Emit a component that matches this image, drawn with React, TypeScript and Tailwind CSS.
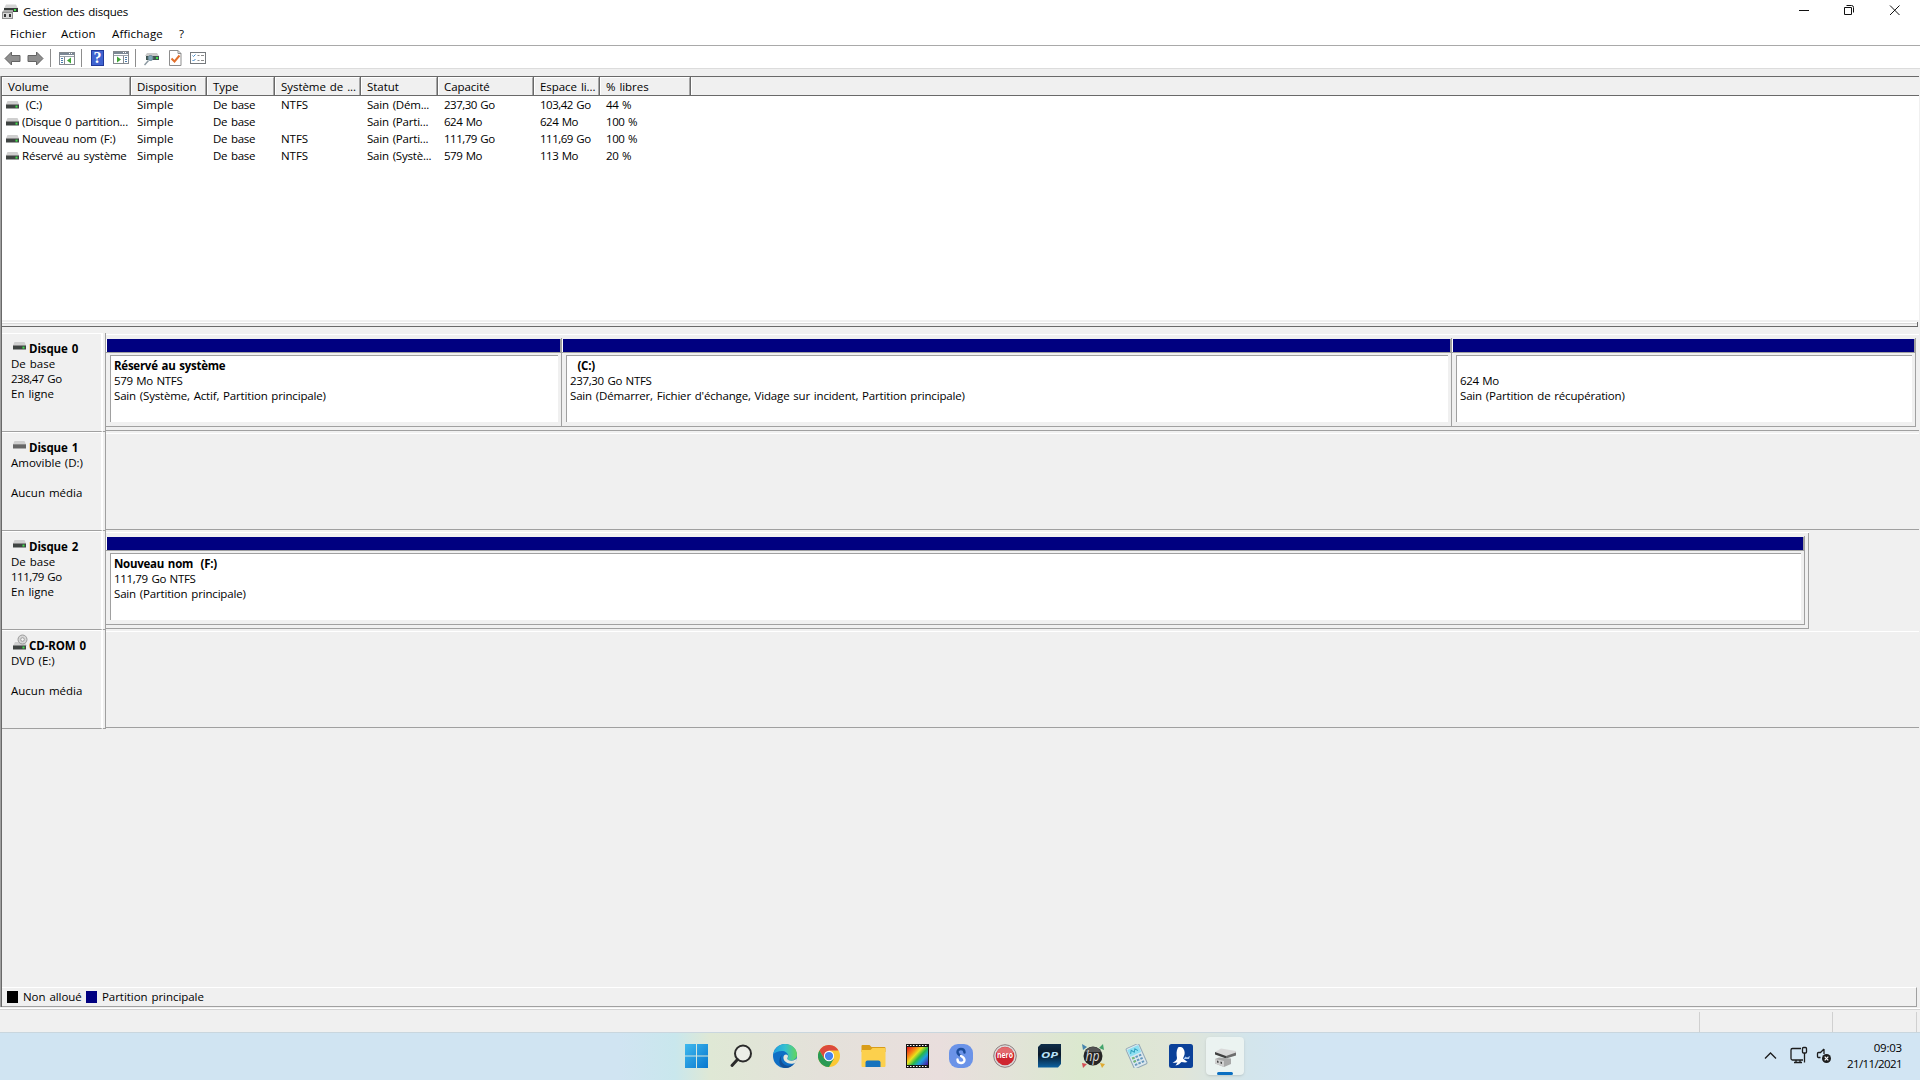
import type { ReactNode } from 'react';
import { clsx } from 'clsx';

interface Volume {
  name: string;
  layout: string;
  type: string;
  fs: string;
  status: string;
  capacity: string;
  free: string;
  percent: string;
}

interface Partition {
  title: string;
  size: string;
  status: string;
  width: string;
}

interface Disk {
  name: string;
  icon: 'disk' | 'removable' | 'cd';
  lines: string[];
  partitions: Partition[];
}

const columns = [
  { key: 'name', label: 'Volume', width: 'w-[129px]', tracking: 'tracking-[-0.2px]' },
  { key: 'layout', label: 'Disposition', width: 'w-[76px]', tracking: 'tracking-[0.05px]' },
  { key: 'type', label: 'Type', width: 'w-[68px]', tracking: 'tracking-[-0.3px]' },
  { key: 'fs', label: 'Système de ...', width: 'w-[86px]', tracking: 'tracking-[-0.05px]' },
  { key: 'status', label: 'Statut', width: 'w-[77px]', tracking: 'tracking-[-0.2px]' },
  { key: 'capacity', label: 'Capacité', width: 'w-[96px]', tracking: 'tracking-[-0.5px]' },
  { key: 'free', label: 'Espace li...', width: 'w-[66px]', tracking: 'tracking-[-0.5px]' },
  { key: 'percent', label: '% libres', width: 'w-[91px]', tracking: 'tracking-[-0.4px]' },
] as const;

const volumes: Volume[] = [
  { name: ' (C:)', layout: 'Simple', type: 'De base', fs: 'NTFS', status: 'Sain (Dém...', capacity: '237,30 Go', free: '103,42 Go', percent: '44 %' },
  { name: '(Disque 0 partition...', layout: 'Simple', type: 'De base', fs: '', status: 'Sain (Parti...', capacity: '624 Mo', free: '624 Mo', percent: '100 %' },
  { name: 'Nouveau nom (F:)', layout: 'Simple', type: 'De base', fs: 'NTFS', status: 'Sain (Parti...', capacity: '111,79 Go', free: '111,69 Go', percent: '100 %' },
  { name: 'Réservé au système', layout: 'Simple', type: 'De base', fs: 'NTFS', status: 'Sain (Systè...', capacity: '579 Mo', free: '113 Mo', percent: '20 %' },
];

const disks: Disk[] = [
  {
    name: 'Disque 0',
    icon: 'disk',
    lines: ['De base', '238,47 Go', 'En ligne'],
    partitions: [
      { title: 'Réservé au système', size: '579 Mo NTFS', status: 'Sain (Système, Actif, Partition principale)', width: 'w-[456px]' },
      { title: '  (C:)', size: '237,30 Go NTFS', status: "Sain (Démarrer, Fichier d'échange, Vidage sur incident, Partition principale)", width: 'w-[890px]' },
      { title: ' ', size: '624 Mo', status: 'Sain (Partition de récupération)', width: 'w-[464px]' },
    ],
  },
  { name: 'Disque 1', icon: 'removable', lines: ['Amovible (D:)', ' ', 'Aucun média'], partitions: [] },
  {
    name: 'Disque 2',
    icon: 'disk',
    lines: ['De base', '111,79 Go', 'En ligne'],
    partitions: [
      { title: 'Nouveau nom  (F:)', size: '111,79 Go NTFS', status: 'Sain (Partition principale)', width: 'w-[1699px]' },
    ],
  },
  { name: 'CD-ROM 0', icon: 'cd', lines: ['DVD (E:)', ' ', 'Aucun média'], partitions: [] },
];

function DriveIcon({ led = true }: { led?: boolean }) {
  return (
    <svg width="13" height="8" viewBox="0 0 13 8" className="shrink-0">
      <path d="M1.500 0h10L13 3.500H0z" fill="#cfcfcf" />
      <rect y="3" width="13" height="4.500" fill={led ? '#3f4442' : '#666'} />
      <rect y="3" width="13" height="1" fill="#8a8a8a" />
      {led && <rect x="9.500" y="4.600" width="2" height="2" fill="#3fe04a" />}
    </svg>
  );
}

function CdIcon() {
  return (
    <svg width="15" height="16" viewBox="0 0 15 16" className="shrink-0">
      <path d="M2 8h10l2 4H0z" fill="#cfcfcf" />
      <circle cx="9.500" cy="5.500" r="4.500" fill="#d6d6d6" stroke="#9b9b9b" />
      <circle cx="9.500" cy="5.500" r="1.800" fill="#f5f5f5" stroke="#9b9b9b" />
      <rect y="11.500" width="13" height="4" fill="#3f4442" />
      <rect x="9.500" y="12.500" width="2" height="2" fill="#3fe04a" />
    </svg>
  );
}

function AppIcon() {
  return (
    <svg width="16" height="16" viewBox="0 0 16 16">
      <path d="M4 0.500h10l2 4H2z" fill="#d4d4d4" />
      <rect x="2" y="4" width="14" height="4" fill="#383c3a" />
      <rect x="12" y="5" width="2" height="2" fill="#3fe04a" />
      <path d="M0 8l2-2h9v9H0z" fill="#aaa" />
      <rect x="0.500" y="8.500" width="10" height="6" fill="#d8d8d8" stroke="#909090" />
      <rect x="2" y="10" width="2" height="3" fill="#333" />
      <rect x="7" y="10" width="2" height="3" fill="#333" />
    </svg>
  );
}

function TitleBar() {
  return (
    <div className="flex h-6 items-center justify-between bg-white pl-[2px]">
      <div className="flex items-center gap-[5px] tracking-[-0.25px]">
        <AppIcon />
        <span>Gestion des disques</span>
      </div>
      <svg width="121" height="24" viewBox="0 0 121 24" fill="none" stroke="#111">
        <path d="M0 10.500h10" />
        <path d="M45.500 7.500h7v7h-7zM47.500 5.500h5q2 0 2 2v5" />
        <path d="M91 5.500l9.500 9.500M100.500 5.500l-9.500 9.500" />
      </svg>
    </div>
  );
}

function MenuBar() {
  return (
    <div className="flex h-[21px] items-center bg-white pb-[2px] pl-[10px] tracking-[0.15px]">
      <span className="w-[51px]">Fichier</span>
      <span className="w-[51px]">Action</span>
      <span className="w-[67px]">Affichage</span>
      <span>?</span>
    </div>
  );
}

function ConsoleIcon({ flip = false }: { flip?: boolean }) {
  return (
    <svg width="17" height="15" viewBox="0 0 17 15">
      <rect x="0.500" y="1.500" width="15" height="12" fill="#fff" stroke="#84898f" />
      <rect x="1" y="2" width="14" height="2" fill="#7b8794" />
      <rect x="10" y="2" width="1" height="1" fill="#fff" />
      <rect x="12" y="2" width="1" height="1" fill="#fff" />
      <path d="M1 5.500h14" stroke="#9aa2ab" />
      {flip ? (
        <>
          <path d="M10.500 6v7" stroke="#84898f" />
          <path d="M12 7.500h2M12 9.500h2M12 11.500h2" stroke="#4b7cab" />
          <path d="M4 6.500v6l4-3z" fill="#3fa535" />
        </>
      ) : (
        <>
          <path d="M5.500 6v7" stroke="#84898f" />
          <path d="M2 7.500h2M2 9.500h2M2 11.500h2" stroke="#4b7cab" />
          <path d="M12 6.500v6l-4-3z" fill="#3fa535" />
        </>
      )}
    </svg>
  );
}

function Arrow({ back = false }: { back?: boolean }) {
  return (
    <svg width="17" height="15" viewBox="0 0 17 15">
      <path
        d={back ? 'M1 7.500L7.500 1v3.500h8.500v6H7.500V14z' : 'M16 7.500L9.500 1v3.500H1v6h8.500V14z'}
        fill="#8f8f8f"
        stroke="#646464"
        strokeLinejoin="round"
      />
    </svg>
  );
}

function Separator() {
  return <div className="h-[18px] w-px bg-[#8d8d8d]" />;
}

function Toolbar() {
  return (
    <div className="flex h-[24px] items-center border-t border-b border-t-[#a9a9a9] border-b-[#dcdcdc] bg-white pt-[2px] pl-1">
      <div className="flex w-[46px] gap-[6px]">
        <Arrow back />
        <Arrow />
      </div>
      <Separator />
      <div className="flex w-[30px] pl-2"><ConsoleIcon /></div>
      <Separator />
      <div className="flex w-[53px] gap-[9px] pl-[9px]">
        <div className="flex h-4 w-[13px] shrink-0 items-center justify-center border border-[#21399b] bg-[#3f63d0] font-['Liberation_Serif',serif] text-[16px] leading-none font-bold text-white">?</div>
        <ConsoleIcon flip />
      </div>
      <Separator />
      <div className="flex items-center gap-[9px] pl-2">
        <svg width="16" height="15" viewBox="0 0 16 15">
          <path d="M3 2h10l2 3H1z" fill="#c9c9c9" />
          <rect x="2" y="5" width="13" height="4" fill="#3f5550" />
          <rect x="12" y="6" width="2" height="2" fill="#3fe04a" />
          <circle cx="6.500" cy="7" r="2.500" fill="#7fa6b8" stroke="#6b8796" />
          <path d="M4.500 9.500L0.500 14" stroke="#8b98a0" strokeWidth="1.500" />
        </svg>
        <svg width="13" height="16" viewBox="0 0 13 16">
          <path d="M0.500 0.500h8.500l3 3v12H0.500z" fill="#fff" stroke="#8d8d8d" />
          <path d="M9 0.500v3h3" fill="none" stroke="#8d8d8d" />
          <path d="M2.500 8.500l3 3 5-6" fill="none" stroke="#e2702c" strokeWidth="2" />
        </svg>
        <svg width="16" height="13" viewBox="0 0 16 13" className="-ml-px">
          <rect x="0.500" y="0.500" width="15" height="11" fill="#fff" stroke="#75797d" />
          <path d="M2.500 3.500l1 1 2-2M2.500 8l1 1 2-2" fill="none" stroke="#3d86c6" />
          <path d="M7.500 3.500h2M11 3.500h3M7.500 8.500h2M11 8.500h3" stroke="#8b8b8b" />
        </svg>
      </div>
    </div>
  );
}

function VolumeList() {
  return (
    <div className="flex h-[244px] shrink-0 flex-col border-t border-[#696969] bg-white">
      <div className="flex h-[19px] border-b border-[#696969] bg-[#f0f0f0]">
        {columns.map((col) => (
          <div key={col.key} className={clsx('h-full shrink-0 border-r border-[#696969]', col.width)}>
            <div className="h-full border-t border-r border-l border-t-white border-r-[#a6a6a6] border-l-white pl-[5px] leading-[17px] tracking-[-0.05px] whitespace-pre">
              {col.label}
            </div>
          </div>
        ))}
        <div className="grow border-l border-white" />
      </div>
      {volumes.map((volume) => (
        <div key={volume.name} className="flex h-[17px] leading-[18px]">
          {columns.map((col) => (
            <div key={col.key} className={clsx('flex shrink-0 whitespace-pre', col.width, col.tracking, col.key === 'name' ? 'gap-[3px] pl-[4px]' : 'pl-[6px]')}>
              {col.key === 'name' && <div className="pt-[5px]"><DriveIcon /></div>}
              {volume[col.key]}
            </div>
          ))}
        </div>
      ))}
    </div>
  );
}

function PartitionBox({ partition }: { partition: Partition }) {
  return (
    <div className={clsx('flex h-[89px] shrink-0 flex-col border-r border-b border-[#a0a0a0]', partition.width)}>
      <div className="mt-px h-[13px] border-r border-l border-r-[#a0a0a0] border-l-white bg-[#000080]" />
      <div className="flex grow flex-col border-t border-[#a0a0a0] pt-[2px] pr-[3px] pb-[4px] pl-[4px]">
        <div className="grow border-t border-l border-[#a0a0a0] bg-white pt-[2px] pl-[3px] leading-[15px] whitespace-pre">
          <div className="font-bold tracking-[-0.25px]">{partition.title}</div>
          <div className="tracking-[-0.35px]">{partition.size}</div>
          <div className="tracking-[-0.17px]">{partition.status}</div>
        </div>
      </div>
    </div>
  );
}

function DiskRow({ disk }: { disk: Disk }) {
  // a smaller disk gets a frame that stops short of the right edge
  const partial = disk.partitions.length === 1;

  return (
    <div className="flex h-[99px]">
      <div className="w-[101px] shrink-0 border-t border-r-2 border-b border-t-white border-r-white border-b-[#a0a0a0] pt-[7px] pl-[9px] leading-[15px] whitespace-pre">
        <div className="flex h-[15px] items-end gap-[2px] pl-[2px] font-bold tracking-[-0.1px]">
          <div className={clsx('w-[14px] shrink-0', disk.icon === 'cd' ? 'pb-[3px]' : 'pb-[6px]')}>
            {disk.icon === 'cd' ? <CdIcon /> : <DriveIcon led={disk.icon === 'disk'} />}
          </div>
          {disk.name}
        </div>
        {disk.lines.map((line, i) => (
          <div key={i} className={/\d/.test(line) ? 'tracking-[-0.5px]' : 'tracking-[0px]'}>{line}</div>
        ))}
      </div>
      <div className="w-[3px] shrink-0 border-r border-b border-[#a0a0a0]" />
      <div className="flex grow flex-col pt-px pb-px">
        <div className={clsx('flex grow border-t border-b border-t-white border-b-[#a0a0a0] pt-[3px]', partial && 'w-[1703px]')}>
          {disk.partitions.map((partition) => (
            <PartitionBox key={partition.status} partition={partition} />
          ))}
          {partial && <div className="-mt-[3px] grow border-r border-[#a0a0a0]" />}
        </div>
      </div>
    </div>
  );
}

function Legend() {
  return (
    <div className="mr-[2px] flex h-5 items-center border-t border-r border-b border-t-white border-r-[#a0a0a0] border-b-[#a0a0a0] pl-[5px] tracking-[-0.05px]">
      <div className="mr-[5px] h-3 w-[11px] bg-black" />
      <span className="w-[63px]">Non alloué</span>
      <div className="mr-[5px] h-3 w-[11px] bg-[#000080]" />
      <span>Partition principale</span>
    </div>
  );
}

function StatusBar() {
  return (
    <div className="flex h-[23px] justify-end border-t border-[#d4d4d4] pt-[2px]">
      <div className="w-[133px] border-l border-[#d0d0d0]" />
      <div className="w-[85px] border-r border-l border-[#d0d0d0]" />
      <div className="w-[3px]" />
    </div>
  );
}

function TaskButton({ active = false, children }: { active?: boolean; children: ReactNode }) {
  return (
    <div className={clsx('relative flex h-[38px] w-[38px] items-center justify-center rounded', active && 'bg-[#ebf3f1] shadow-sm')}>
      {children}
      {active && <div className="absolute bottom-0 h-[3px] w-4 rounded-full bg-[#0a6fc2]" />}
    </div>
  );
}

function Taskbar() {
  return (
    <div className="flex h-12 items-center border-t border-[#c9d6de] bg-[linear-gradient(90deg,#d0e4f2_0,#d0e4f2_620px,#c9e7ed_675px,#dfe8d5_710px,#e4e1da_820px,#e9dedd_940px,#e2e3d8_1010px,#dbe8cf_1080px,#e0e5d8_1180px,#d3e5ec_1250px,#d2e5f3_1300px)] pb-px">
      <div className="flex grow gap-[6px] pl-[678px]">
        <TaskButton>
          <svg width="23" height="24" viewBox="0 0 23 24" className="-ml-px">
            <defs>
              <linearGradient id="win" x1="0" y1="0" x2="1" y2="1">
                <stop offset="0" stopColor="#3fb9ee" />
                <stop offset="1" stopColor="#0877cf" />
              </linearGradient>
            </defs>
            <path d="M0 0h11v11.500H0zM12 0h11v11.500H12zM0 12.500h11V24H0zM12 12.500h11V24H12z" fill="url(#win)" />
          </svg>
        </TaskButton>
        <TaskButton>
          <svg width="24" height="24" viewBox="0 0 24 24" fill="none" stroke="#2b2b2b">
            <circle cx="14" cy="9.500" r="8" strokeWidth="2" fill="#eceee8" />
            <path d="M8.500 15.500L3 21.500" strokeWidth="3" strokeLinecap="round" />
          </svg>
        </TaskButton>
        <TaskButton>
          <svg width="24" height="24" viewBox="0 0 24 24">
            <defs>
              <linearGradient id="edgeTop" x1="0" x2="1">
                <stop offset="0" stopColor="#1e9fe0" />
                <stop offset="0.500" stopColor="#35c0d0" />
                <stop offset="1" stopColor="#62d65a" />
              </linearGradient>
            </defs>
            <circle cx="12" cy="12" r="12" fill="#0f6fc5" />
            <path d="M0.300 10C1.500 4 6.500 0 12 0c7 0 12 5 12 10.500 0 4-3 6-6 6-2.500 0-4-1-3.500-2 .7-1 .8-1.500.8-2.500C15 9 12 7 9 7 5 7 2 8.500 0.300 10z" fill="url(#edgeTop)" />
            <path d="M9.500 10.500c-3 3-1.500 9.500 4 11 3 .8 6-.3 8-2.500-2 3.500-5.500 5-9 5C7 23.800 6 19 6.500 16c.3-2.500 1.500-4.500 3-5.500z" fill="#124f96" />
            <path d="M15 12c0 1.500-1 2-.6 3 .8 1.700 4.600 2.500 8 .5l1.600-1-1.500 4c-2 1.500-5.500 1.600-8 .5-3.500-1.500-5-5-3.500-7.500 1.500-2 4-1 4 .5z" fill="#e5e7dc" />
          </svg>
        </TaskButton>
        <TaskButton>
          <svg width="22" height="22" viewBox="0 0 24 24">
            <circle cx="12" cy="12" r="12" fill="#fbc834" />
            <path d="M12 6h10.400A12 12 0 0 0 1.600 6L6.800 15z" fill="#dc4a3d" />
            <path d="M1.600 6A12 12 0 0 0 12 24l5.200-9L6.800 15z" fill="#2a9a54" />
            <circle cx="12" cy="12" r="5.600" fill="#fff" />
            <circle cx="12" cy="12" r="4.500" fill="#4583ee" />
          </svg>
        </TaskButton>
        <TaskButton>
          <svg width="25" height="22" viewBox="0 0 25 22">
            <path d="M0.500 1q0-1 1-1h7l2 2h13q1 0 1 1v4H0.500z" fill="#d99c18" />
            <path d="M0.500 5h9l2-2h12q1 0 1 1v17q0 1-1 1h-22q-1 0-1-1z" fill="#fcd04d" />
            <path d="M4.500 22v-4.500q0-2 2-2h11q2 0 2 2V22z" fill="#1773bd" />
          </svg>
        </TaskButton>
        <TaskButton>
          <svg width="23" height="24" viewBox="0 0 23 24">
            <defs>
              <linearGradient id="film" x1="0" y1="0.100" x2="1" y2="0.900">
                <stop offset="0" stopColor="#e82519" />
                <stop offset="0.250" stopColor="#f78c14" />
                <stop offset="0.400" stopColor="#e8e21c" />
                <stop offset="0.580" stopColor="#27b84a" />
                <stop offset="0.750" stopColor="#1c9fe0" />
                <stop offset="1" stopColor="#4422a8" />
              </linearGradient>
            </defs>
            <rect width="23" height="24" fill="#151515" />
            <rect x="1" y="3" width="21" height="18" fill="url(#film)" />
            <path d="M1 1.500h21M1 22.500h21" stroke="#fff" strokeDasharray="1.500 1.500" />
          </svg>
        </TaskButton>
        <TaskButton>
          <svg width="24" height="24" viewBox="0 0 24 24" fill="none" strokeWidth="2.400" strokeLinecap="round">
            <rect width="24" height="24" rx="9" fill="#6b93e8" />
            <path d="M15.500 8.500c0-4.500-7-4.500-7-.5 0 2 1.500 3 3.500 4" stroke="#1c4d9c" />
            <path d="M8.500 15.500c0 4.500 7 4.500 7 .5 0-2-1.500-3-3.500-4" stroke="#fff" />
          </svg>
        </TaskButton>
        <TaskButton>
          <svg width="24" height="24" viewBox="0 0 24 24">
            <circle cx="12" cy="12" r="11.300" fill="#d9d9d9" stroke="#8f7f7f" />
            <circle cx="12" cy="12" r="9.300" fill="#cf2630" />
            <path d="M3.500 9a9 9 0 0 1 17 0z" fill="#e26a6d" />
            <text x="12" y="14" textAnchor="middle" fontSize="8" fontWeight="bold" fill="#fff" fontFamily="Open Sans, sans-serif" letterSpacing="0" textLength="16" lengthAdjust="spacingAndGlyphs">nero</text>
          </svg>
        </TaskButton>
        <TaskButton>
          <svg width="23" height="24" viewBox="0 0 23 24">
            <defs>
              <linearGradient id="op" x1="0" y1="0" x2="0" y2="1">
                <stop offset="0" stopColor="#0f2e4a" />
                <stop offset="0.450" stopColor="#091829" />
                <stop offset="1" stopColor="#0d62a2" />
              </linearGradient>
            </defs>
            <path d="M3 0h20v20l-3 3.500H0V3z" fill="url(#op)" />
            <text x="11.500" y="13.500" textAnchor="middle" fontSize="9.500" fontWeight="bold" fontStyle="italic" fill="#b9e2fa" fontFamily="Open Sans, sans-serif" letterSpacing="0" textLength="17" lengthAdjust="spacingAndGlyphs">OP</text>
          </svg>
        </TaskButton>
        <TaskButton>
          <svg width="24" height="24" viewBox="0 0 24 24">
            <path d="M1 0l5 3-4 3z" fill="#4684ad" />
            <path d="M22 0l-4 4 5 2z" fill="#43a46b" />
            <path d="M1 19l5 1-4 4z" fill="#d44d55" />
            <path d="M19 19l5 1-3 4z" fill="#dfab32" />
            <circle cx="12" cy="12" r="9.500" fill="#252525" />
            <path d="M4 8a9 9 0 0 1 16 0z" fill="#535353" />
            <text x="11.500" y="16.500" textAnchor="middle" fontSize="14" fontStyle="italic" fill="#ddd" fontFamily="Open Sans, sans-serif" letterSpacing="0" textLength="14" lengthAdjust="spacingAndGlyphs">hp</text>
          </svg>
        </TaskButton>
        <TaskButton>
          <svg width="26" height="24" viewBox="0 0 26 24">
            <g transform="rotate(-24 13 12)">
              <rect x="5.500" y="1" width="14" height="22" rx="1.500" fill="#dce8ee" stroke="#91a8b7" />
              <rect x="6.500" y="2.500" width="12" height="7.500" fill="#8fe0f2" />
              <path d="M8 7.500l2-3 2 3 2-3 2 3" fill="none" stroke="#2f9fbc" />
              <path d="M7.500 12.500h10M7.500 16h10M7.500 19.500h10" stroke="#6598bd" strokeWidth="2" strokeDasharray="2.500 1.200" />
              <path d="M7.500 12.500h2.500M7.500 16h2.500" stroke="#7abf75" strokeWidth="2" />
            </g>
          </svg>
        </TaskButton>
        <TaskButton>
          <svg width="24" height="24" viewBox="0 0 24 24">
            <rect width="24" height="24" rx="2.500" fill="#0b4199" />
            <path d="M9 3.500c2-1 4.500-.5 5.500 1.500 1.500 2.500 1.500 5 .5 7l-1 2.500 4.500 3.500c-2.500.8-4 .2-6 0-1.500 1.500-3 3-6 3.500l2-3-5 .500c2.500-1.500 4.500-3 4.500-5C7.500 10.500 7 7 9 3.500z" fill="#fff" />
            <path d="M14.500 15l2-2.500 1.500 1 3-1.500-1 3z" fill="#a8c6ef" />
          </svg>
        </TaskButton>
        <TaskButton active>
          <svg width="23" height="20" viewBox="0 0 23 20" className="mt-[3px]">
            <path d="M1 4l6-3.500 15 2.500v2.500L12 9z" fill="#d9d9d9" />
            <path d="M1 4l11 4v2.500L1 6.500z" fill="#3f3f3f" />
            <path d="M12 8l10-3.500v3L12 10.500z" fill="#6d6d6d" />
            <path d="M1 11l4-1.500 12 1v5.500l-7 3-9-3.500z" fill="#a8a8a8" />
            <path d="M1 11l9 2v6l-9-3.500z" fill="#cfcfcf" />
            <path d="M3 12.500l1.500.5v2L3 14.500zM6.500 13.500l1.500.5v2l-1.500-.5z" fill="#444" />
          </svg>
        </TaskButton>
      </div>
      <div className="flex items-center">
        <svg width="68" height="20" viewBox="0 0 68 20" fill="none" stroke="#1c1c1c" strokeWidth="1.300" className="mr-[10px]">
          <path d="M1 12.500l5.500-5.500 5.500 5.500" />
          <path d="M37 2.500H28.500q-1.500 0-1.500 1.500v8.500q0 1.500 1.500 1.500H39M30 16.500h8M32 14v2.500M36 14v2.500M40.500 7v9.500" />
          <rect x="38.500" y="1.500" width="4" height="5.500" rx="1" />
          <path d="M60 3v5M60 3l-3.500 3.500h-2q-1 0-1 1v3q0 1 1 1h2" />
          <circle cx="62.500" cy="12.500" r="4.500" fill="#1c1c1c" stroke="none" />
          <path d="M60.700 10.700l3.600 3.600M64.300 10.700l-3.600 3.600" stroke="#fff" strokeWidth="1.200" />
        </svg>
        <div className="w-[60px] text-right leading-4">
          <div className="tracking-[-0.2px]">09:03</div>
          <div className="tracking-[-0.6px]">21/11/2021</div>
        </div>
        <div className="w-[18px]" />
      </div>
    </div>
  );
}

export default function App() {
  return (
    <div className="flex h-[1080px] w-[1920px] flex-col overflow-hidden bg-[#f0f0f0] font-['Open_Sans','Noto_Sans',sans-serif] text-[11.5px] tracking-[-0.05px] text-black [word-spacing:1px]">
      <TitleBar />
      <MenuBar />
      <Toolbar />
      <div className="h-[7px]" />
      <div className="flex h-[931px] border-l border-[#a0a0a0] pr-px">
        <div className="flex grow flex-col border-l border-[#696969]">
          <VolumeList />
          {/* splitter between the list and the graphical view */}
          <div className="h-[2px]" />
          <div className="mr-px h-[5px] border-r border-b border-[#696969] bg-[#f0f0f0]">
            <div className="h-[2px] border-t border-b border-t-white border-b-[#d9d9d9]" />
          </div>
          <div className="h-[6px]" />
          <div className="grow">
            {disks.map((disk) => (
              <DiskRow key={disk.name} disk={disk} />
            ))}
          </div>
          <Legend />
        </div>
      </div>
      <div className="h-[2px] shrink-0 border-b border-white" />
      <StatusBar />
      <Taskbar />
    </div>
  );
}
